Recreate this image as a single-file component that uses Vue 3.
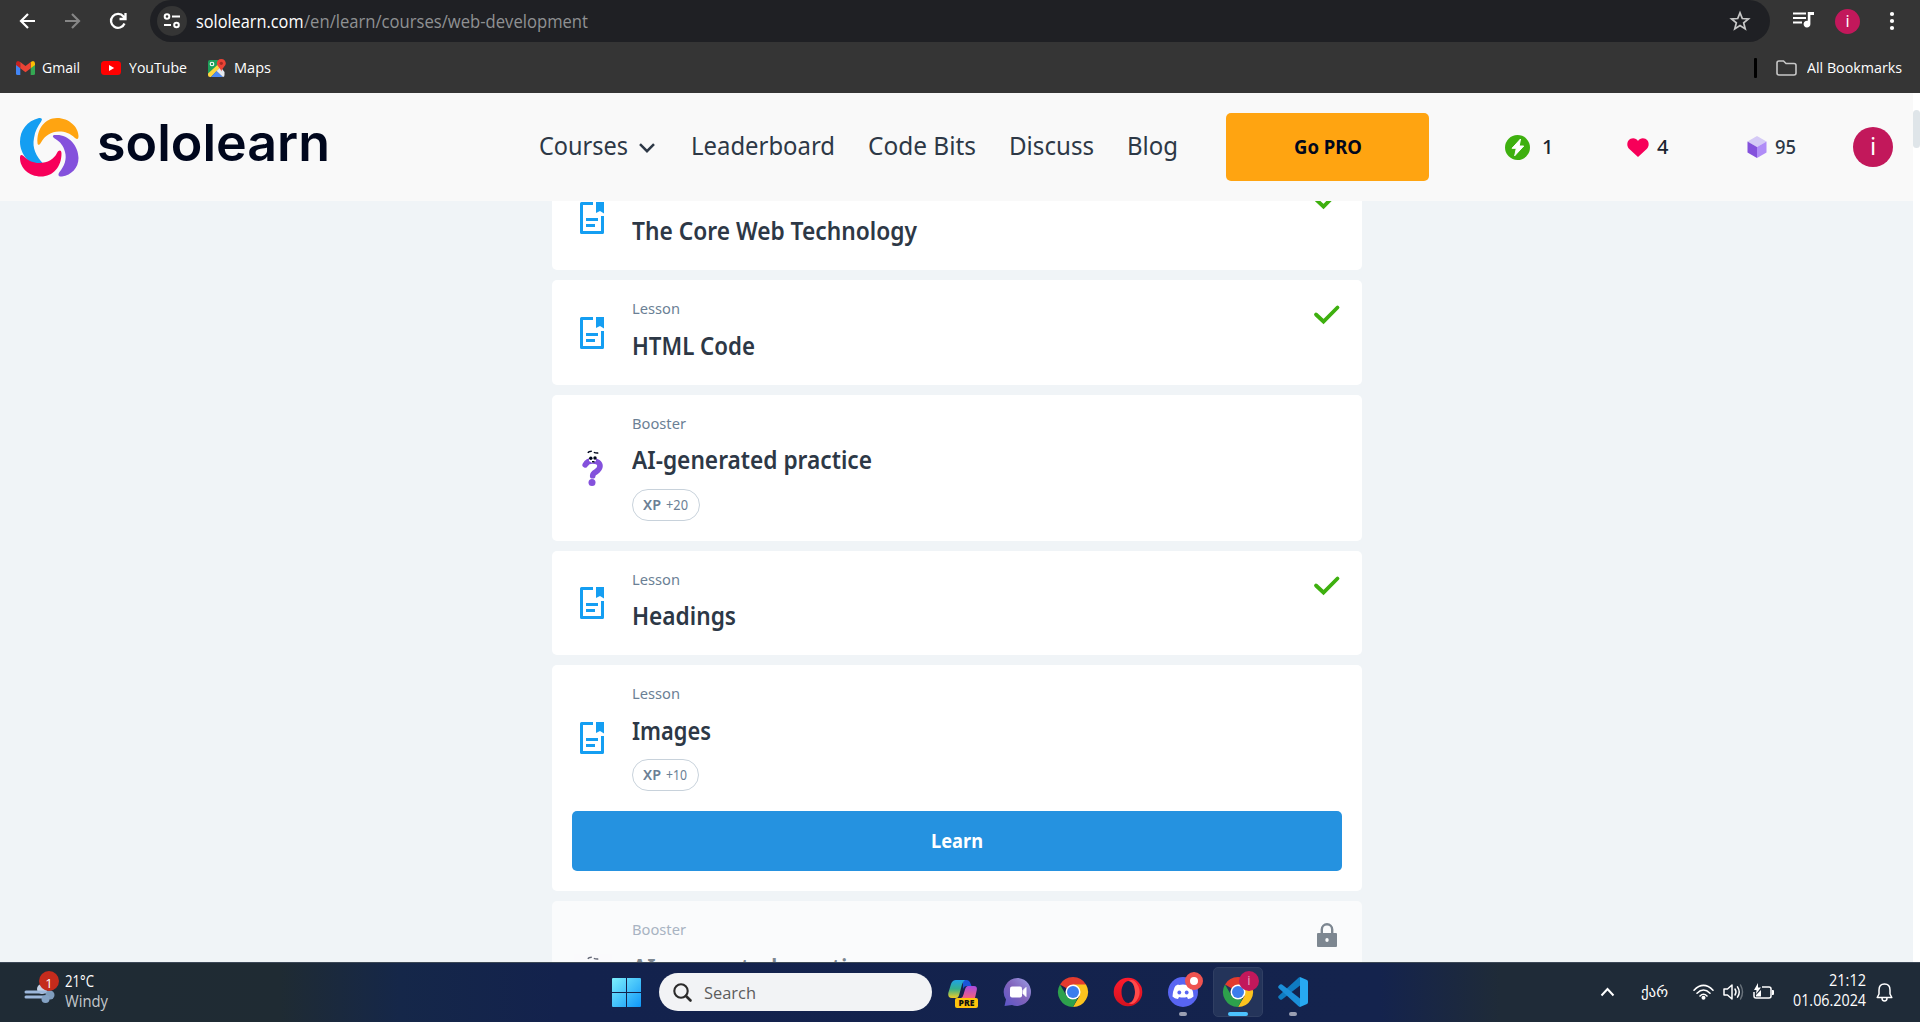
<script setup>
const vFit = {
  mounted(el, { value }) {
    const natural = el.getBoundingClientRect().width
    el.style.width = value + 'px'
    el.style.transform = `scaleX(${value / natural})`
  }
}

const bookmarks = [
  { name: 'Gmail', w: 38 },
  { name: 'YouTube', w: 58 },
  { name: 'Maps', w: 37 }
]

const nav = [
  { name: 'Courses', w: 89, menu: true },
  { name: 'Leaderboard', w: 144 },
  { name: 'Code Bits', w: 108 },
  { name: 'Discuss', w: 85 },
  { name: 'Blog', w: 51 }
]

const cards = [
  { kind: 'Lesson', kw: 48, title: 'The Core Web Technology', w: 285, state: 'done', h: 105, gap: 12 },
  { kind: 'Lesson', kw: 48, title: 'HTML Code', w: 123, state: 'done', h: 105, gap: 12 },
  { kind: 'Booster', kw: 54, title: 'AI-generated practice', w: 240, xp: '+20', xw: 22, h: 146, gap: 11 },
  { kind: 'Lesson', kw: 48, title: 'Headings', w: 104, state: 'done', h: 104, gap: 11 },
  { kind: 'Lesson', kw: 48, title: 'Images', w: 79, xp: '+10', xw: 21, h: 146, gap: 12, action: 'Learn' },
  { kind: 'Booster', kw: 54, title: 'AI-generated practice', w: 240, xp: '+20', xw: 22, state: 'locked', h: 146, gap: 13 }
]
</script>

<template>
  <div class="screen">
    <header class="browser">
      <div class="toolbar">
        <svg class="back" width="18" height="18" viewBox="0 0 18 18"><path d="M16 9H2.500M9 2L2 9l7 7" /></svg>
        <svg class="forward" width="18" height="18" viewBox="0 0 18 18"><path d="M2 9h13.500M9 2l7 7-7 7" /></svg>
        <svg class="reload" width="20" height="20" viewBox="0 0 20 20"><path d="M16.500 12.500A7 7 0 1 1 15.500 5.500L17 7.500M17.500 2v6h-6" /></svg>
        <div class="omnibox">
          <span class="site-info">
            <svg width="18" height="16" viewBox="0 0 18 16"><circle cx="4" cy="3.500" r="2.300" /><path d="M9 3.500h8M1 12h7" /><circle cx="13.500" cy="12" r="2.300" /></svg>
          </span>
          <span v-fit="107.500" class="host">sololearn.com</span><span v-fit="284" class="path">/en/learn/courses/web-development</span>
          <svg class="star" width="22" height="22" viewBox="0 0 24 24"><path d="M12 3l2.500 6.300 6.700.500-5.200 4.300 1.700 6.500-5.700-3.600-5.700 3.600L8 14.100 2.800 9.800l6.700-.500z" /></svg>
        </div>
        <svg class="media" width="21" height="17" viewBox="0 0 21 17"><path d="M0 1.500h13M0 6h13M0 10.500h9" stroke="#fff" stroke-width="2.200" /><path d="M14.800 0H21v3h-3.600v9a3.400 3.400 0 1 1-2.600-3.200z" fill="#fff" /></svg>
        <span class="profile">i</span>
        <svg class="dots" width="6" height="20" viewBox="0 0 6 20"><circle cx="3" cy="3" r="2.100" /><circle cx="3" cy="10" r="2.100" /><circle cx="3" cy="17" r="2.100" /></svg>
      </div>
      <div class="bookmarks">
        <div v-for="b in bookmarks" :key="b.name" class="bookmark">
          <svg v-if="b.name === 'Gmail'" width="19" height="14" viewBox="0 0 19 14"><path d="M0 2v10.500Q0 14 1.500 14H4.300V6z" fill="#4285f4" /><path d="M19 2v10.500q0 1.500-1.500 1.500h-2.800V6z" fill="#34a853" /><path d="M14.700 1L17 .100q2 .200 2 2.300V4l-4.300 3.300z" fill="#fbbc04" /><path d="M4.300 1L2 .100Q0 .300 0 2.400V4l4.300 3.300z" fill="#c5221f" /><path d="M4.300 1l5.200 4 5.200-4v6.200l-5.200 4-5.200-4z" fill="#ea4335" /></svg>
          <svg v-else-if="b.name === 'YouTube'" width="20" height="14" viewBox="0 0 20 14"><rect width="20" height="14" rx="3.500" fill="#f00" /><path d="M8 4l5.200 3L8 10z" fill="#fff" /></svg>
          <svg v-else width="18" height="18" viewBox="0 0 18 18"><path d="M0 3q0-2 2-2h8l1 7-8 7.500L0 14z" fill="#1e9f5a" /><path d="M0 14.500L11 4.500l2 3L3 18H2q-2 0-2-2z" fill="#fdd63f" /><path d="M3 18l5.500-6L15 18z" fill="#4c8bf5" /><path d="M8.500 12l4-4 4 5v3q0 2-1.500 2z" fill="#e7eaf0" /><circle cx="4" cy="5" r="1.800" fill="none" stroke="#fff" stroke-width="1.100" /><path d="M13.300 0c2.700 0 4.500 2 4.500 4.300 0 3-3.500 4.200-4.500 8.200-1-4-4.500-5.200-4.500-8.200C8.800 2 10.600 0 13.300 0z" fill="#ea4335" /><circle cx="13.300" cy="4.300" r="1.600" fill="#a52a22" /></svg>
          <span v-fit="b.w">{{ b.name }}</span>
        </div>
        <div class="all-bookmarks">
          <i class="divider"></i>
          <svg width="21" height="16" viewBox="0 0 21 16"><path d="M1 3q0-2 2-2h4.500l2.500 2.500h8q2 0 2 2V13q0 2-2 2H3q-2 0-2-2z" fill="none" stroke="#c7c7c7" stroke-width="1.600" /></svg>
          <span v-fit="95">All Bookmarks</span>
        </div>
      </div>
    </header>

    <div class="page">
      <main class="site">
        <div class="site-header">
          <svg class="logo" width="60" height="60" viewBox="0 0 60 60">
            <path d="M20 1C8 4 1 13 1 25c0 12 10 24 22 26 3.500 0 3.500-2 1.500-4C17 39 13 31 15 21c1-7 4-12 6.500-15.500C24 2 23 1 20 1z" fill="#149ef2" />
            <path d="M18.500 26C17.500 12 26 1 38 1c12 0 21.500 9 21.500 18 0 3-1 4-3.500 2-5-5-10-6.500-16-6.500-8 0-14 4-18 11-1.500 3-3.500 3-3.500.5z" fill="#ffa411" />
            <path d="M36.500 18c12-1 23 10 23 23 0 10-7 17-16.500 18.500-3.500.5-4.500-1.500-2.500-4.500 5-6 7.500-13 5.500-20-1.500-6-4.500-10-9.500-13-3.500-2-3.500-4 0-4z" fill="#8451dc" />
            <path d="M1 41c0-3 1-4 3.500-2 5 5 10 7 15.500 7 9 0 15-4 18-10 2-3.500 4.500-3 4.500.5C42.500 50 34 59.500 22 59.500 10 59.500 1 51 1 41z" fill="#f70059" />
          </svg>
          <span v-fit="233" class="wordmark">sololearn</span>
          <nav>
            <a v-for="n in nav" :key="n.name"><span v-fit="n.w">{{ n.name }}</span>
              <svg v-if="n.menu" width="16" height="10" viewBox="0 0 16 10"><path d="M1 1.200l7 7 7-7" /></svg>
            </a>
          </nav>
          <button class="pro"><span v-fit="68">Go PRO</span></button>
          <div class="stat streak">
            <svg width="25" height="25" viewBox="0 0 25 25"><circle cx="12.500" cy="12.500" r="12.500" fill="#3eb00f" /><path d="M15.500 4L7 13.300h4.300L9.700 20.800l9-9.800h-4.500z" fill="#fff" stroke="#fff" stroke-linejoin="round" /></svg>
            <b>1</b>
          </div>
          <div class="stat hearts">
            <svg width="22" height="19" viewBox="0 0 22 19"><path d="M11 19L2.300 11C-.400 8.300 0 4.500 1.500 2.500 4-.800 9-.500 11 3c2-3.500 7-3.800 9.500-.500 1.500 2 1.900 5.800-.8 8.500z" fill="#f70059" /></svg>
            <b>4</b>
          </div>
          <div class="stat bits">
            <svg width="20" height="22" viewBox="0 0 20 22"><path d="M10 0l9.500 5.500L10 11 .500 5.500z" fill="#d5caf6" /><path d="M.500 5.500L10 11v11L.500 16.500z" fill="#8451dc" /><path d="M19.500 5.500L10 11v11l9.500-5.500z" fill="#b08cf7" /></svg>
            <b v-fit="21">95</b>
          </div>
          <span class="avatar">i</span>
        </div>

        <div class="viewport">
          <div class="list">
            <section v-for="(c, i) in cards" :key="i" class="card" :class="c.state">
              <div class="row" :style="{ height: c.h + 'px' }">
                <span class="kind-icon">
                  <svg v-if="c.kind === 'Lesson'" width="24" height="32" viewBox="0 0 24 32"><path d="M13 0v3H3v26h18V14h3v16.500q0 1.500-1.500 1.500h-21Q0 32 0 30.500v-29Q0 0 1.500 0zM16 0h8v11.500L20 9l-4 2zM6 16h12v3H6zM6 22h9v3H6z" fill="#149ef2" /></svg>
                  <svg v-else width="24" height="36" viewBox="0 0 24 36"><path d="M5.200 14.800C6.800 12 9.300 10.900 12.500 10.900c4.600 0 7.500 2 7.500 5.200 0 3-1.700 4.300-4.300 5.900-2.100 1.200-2.900 2-3 3.800" fill="none" stroke="#8451dc" stroke-width="5.600" stroke-linecap="round" /><circle cx="12" cy="32.500" r="3.500" fill="#8451dc" /><path d="M9 7.500h7v3.500l-3.500 2L9 11z" fill="#fff" /><circle cx="10.800" cy="8.300" r="1.700" fill="#00071d" /><circle cx="15" cy="8" r="1.700" fill="#00071d" /><path d="M7.800 2.800q1-1.400 4-1.500M13.800 2.400q2.500.800 4.500.500M12 11.700h2.500" fill="none" stroke="#00071d" stroke-width="1.500" /></svg>
                </span>
                <div class="text">
                  <div class="kind"><span v-fit="c.kw">{{ c.kind }}</span></div>
                  <div class="title" :style="{ marginTop: c.gap + 'px', marginBottom: 26 - c.gap + 'px' }"><span v-fit="c.w">{{ c.title }}</span></div>
                  <div v-if="c.xp" class="xp"><b v-fit="18">XP</b><span v-fit="c.xw">{{ c.xp }}</span></div>
                </div>
                <svg v-if="c.state === 'done'" class="status" width="26" height="20" viewBox="0 0 26 20"><path d="M2 9.500l7.500 7L23.500 2.500" fill="none" stroke="#3eb00f" stroke-width="3.800" stroke-linecap="round" /></svg>
                <svg v-if="c.state === 'locked'" class="status lock" width="20" height="25" viewBox="0 0 20 25"><path d="M4.800 11V6.500a5.200 5.200 0 0 1 10.400 0V11" fill="none" stroke="#7d8791" stroke-width="2.400" /><path d="M1 10h18q1 0 1 1v12q0 1-1 1H1q-1 0-1-1V11q0-1 1-1zM10 15a1.700 2 0 1 0 0 4 1.700 2 0 1 0 0-4" fill="#7d8791" fill-rule="evenodd" /></svg>
              </div>
              <button v-if="c.action" class="action"><span v-fit="52">{{ c.action }}</span></button>
            </section>
          </div>
        </div>
      </main>
      <aside class="scrollbar"><i></i></aside>
    </div>

    <footer class="taskbar">
      <div class="weather">
        <svg width="40" height="36" viewBox="0 0 40 36"><circle cx="17" cy="16" r="5" fill="#c6d3e6" /><path d="M1 19h21" stroke="#9db8dc" stroke-width="3" stroke-linecap="round" /><path d="M1 24h17" stroke="#9db8dc" stroke-width="3" stroke-linecap="round" /><circle cx="25" cy="22" r="4.500" fill="#7f9dbd" /><circle cx="20.500" cy="26" r="4" fill="#84a2c4" /><circle cx="24" cy="8" r="10" fill="#c42b1c" /></svg>
        <span class="count">1</span>
        <div><span v-fit="29">21°C</span><span v-fit="43" class="dim">Windy</span></div>
      </div>
      <div class="center">
        <svg class="start" width="29" height="29" viewBox="0 0 29 29"><defs><linearGradient id="win" x2="1" y2="1"><stop stop-color="#7df0fd" /><stop offset="1" stop-color="#0f96f8" /></linearGradient></defs><path d="M1 0h13v14H0V1q0-1 1-1zM15 0h13q1 0 1 1v13H15zM0 15h14v14H1q-1 0-1-1zM15 15h14v13q0 1-1 1H15z" fill="url(#win)" /></svg>
        <div class="search">
          <svg width="19" height="19" viewBox="0 0 19 19"><circle cx="8" cy="8" r="6.700" fill="none" stroke="#2b2b2b" stroke-width="2.100" /><path d="M13 13l4.500 4.500" stroke="#2b2b2b" stroke-width="2.600" stroke-linecap="round" /></svg>
          <span v-fit="52">Search</span>
        </div>
        <div class="app copilot">
          <svg width="30" height="30" viewBox="0 0 30 30"><defs><linearGradient id="cpa" x2="0" y2="1"><stop stop-color="#1fa3e8" /><stop offset=".5" stop-color="#35b08c" /><stop offset="1" stop-color="#f1ce25" /></linearGradient><linearGradient id="cpb" x2="0" y2="1"><stop stop-color="#a64be0" /><stop offset="1" stop-color="#f5617c" /></linearGradient></defs><path d="M15 3h3.500q3 0 4 3.500L23.500 9H19q-3 0-4 3z" fill="#1956d8" /><path d="M8 3h9q-2 1-3 4.500l-3 11Q10.300 21 8 21H4q-4.500 0-3.700-5L3 7q1.500-4 5-4z" fill="url(#cpa)" /><path d="M20 9h6q3.500 0 2.800 4L27 21H13q2-1 2.500-3.500l1.500-5Q18 9 20 9z" fill="url(#cpb)" /></svg>
          <span class="pre">PRE</span>
        </div>
        <div class="app"><svg width="30" height="30" viewBox="0 0 30 30"><defs><linearGradient id="chat" x1="1" x2="0" y2="1"><stop stop-color="#9c9fe6" /><stop offset=".5" stop-color="#8163bb" /><stop offset="1" stop-color="#5a55c8" /></linearGradient></defs><path d="M15.500 1A14 14 0 1 1 9 28L1.500 29 3 22.500A14 14 0 0 1 15.500 1z" fill="url(#chat)" /><rect x="7" y="9.500" width="12" height="11" rx="2" fill="#fff" /><path d="M20 13.500l3-3v9l-3-3z" fill="#fff" stroke="#fff" stroke-linejoin="round" /></svg></div>
        <div class="app"><svg width="30" height="30" viewBox="0 0 30 30"><path d="M15 15L2 7.500A15 15 0 0 1 28 7.500z" fill="#e33b2e" /><path d="M15 7.500h13A15 15 0 0 1 15 30l6.500-11z" fill="#fcc31e" /><path d="M2 7.500l6.500 11.300L15 22.500l4.500-1L15 30A15 15 0 0 1 2 7.500z" fill="#2da14c" /><circle cx="15" cy="15" r="7.500" fill="#fff" /><circle cx="15" cy="15" r="6" fill="#3b7ded" /></svg></div>
        <div class="app"><svg width="30" height="30" viewBox="0 0 30 30"><defs><linearGradient id="op" x2="0" y2="1"><stop stop-color="#ff1b2d" /><stop offset="1" stop-color="#d3121f" /></linearGradient></defs><path d="M15 .700a14.300 14.300 0 1 0 0 28.600 14.300 14.300 0 0 0 0-28.600zM15.500 4c4 0 6.500 5 6.500 11s-2.500 11-6.500 11S8.500 21 8.500 15s3-11 7-11z" fill="url(#op)" fill-rule="evenodd" /><path d="M15.500 4q3-2 6 0A14.300 14.300 0 0 1 21.500 26q-3 2-6 0C19.500 26 22 21 22 15S19.500 4 15.500 4z" fill="#ff4b4b" /></svg></div>
        <div class="app"><svg width="30" height="30" viewBox="0 0 30 30"><circle cx="15" cy="15" r="15" fill="#5865f2" /><path d="M11 8q4-1 8 0l1-.500q3 1 3.500 3 2 4.500 2 9-2 2-5.500 2.500l-1-2q-4 1-8 0l-1 2q-3.500-.500-5.500-2.500 0-4.500 2-9 .500-2 3.500-3z" fill="#fff" /><ellipse cx="11.300" cy="15.500" rx="1.900" ry="2.100" fill="#5865f2" /><ellipse cx="18.700" cy="15.500" rx="1.900" ry="2.100" fill="#5865f2" /></svg><i class="rec"></i><i class="run"></i></div>
        <div class="app active"><svg width="30" height="30" viewBox="0 0 30 30"><path d="M15 15L2 7.500A15 15 0 0 1 28 7.500z" fill="#e33b2e" /><path d="M15 7.500h13A15 15 0 0 1 15 30l6.500-11z" fill="#fcc31e" /><path d="M2 7.500l6.500 11.300L15 22.500l4.500-1L15 30A15 15 0 0 1 2 7.500z" fill="#2da14c" /><circle cx="15" cy="15" r="7.500" fill="#fff" /><circle cx="15" cy="15" r="6" fill="#3b7ded" /></svg><i class="user">i</i><i class="run"></i></div>
        <div class="app"><svg width="30" height="30" viewBox="0 0 30 30"><path d="M22 0l7 3q1 .500 1 2v20q0 1.500-1 2l-7 3z" fill="#27a9f1" /><path d="M22 8.500L4 22.500q-1 .500-2 0l-1.500-1.500q-.800-1 0-2L20.500.700Q21.500 0 22 0z" fill="#0f7bc1" /><path d="M22 21.500L4 7.500q-1-.500-2 0L.500 9q-.800 1 0 2l20 18.300q1 .700 1.500.700z" fill="#1b8fd9" /></svg><i class="run"></i></div>
      </div>
      <div class="tray">
        <svg class="up" width="15" height="10" viewBox="0 0 15 10"><path d="M1.500 8.500l6-6.500 6 6.500" fill="none" stroke="#fff" stroke-width="2" /></svg>
        <span v-fit="27" class="lang">ქარ</span>
        <svg class="wifi" width="21" height="16" viewBox="0 0 21 16"><g fill="none" stroke="#fff" stroke-width="1.600" stroke-linecap="round"><path d="M1 6.200q9.500-9.500 19 0M4 9.200q6.500-6.500 13 0M7 12q3.500-3.500 7 0" /></g><circle cx="10.500" cy="13.800" r="2" fill="#fff" /></svg>
        <svg class="sound" width="21" height="18" viewBox="0 0 21 18"><g fill="none" stroke="#fff" stroke-width="1.500" stroke-linejoin="round" stroke-linecap="round"><path d="M1 6h3.500L9 2v14l-4.500-4H1zM12 6q2 3 0 6M14.500 3.800q3.500 5.200 0 10.400" /><path d="M17.500 2q4 7 0 14" stroke="#69727b" /></g></svg>
        <svg class="battery" width="21" height="18" viewBox="0 0 21 18"><path d="M9 4h7q2 0 2 2v7q0 2-2 2H3q-2 0-2-2V9" fill="none" stroke="#fff" stroke-width="1.500" /><path d="M19 7h1q1 0 1 1v3q0 1-1 1h-1zM5 0L1 7h2.500L3 11l5-6.500H5zM3 13.500V12l5-5v6.500z" fill="#fff" /></svg>
        <div class="clock"><span v-fit="37">21:12</span><span v-fit="73">01.06.2024</span></div>
        <svg class="bell" width="17" height="19" viewBox="0 0 17 19"><path d="M1.200 14.500L3 11V7q0-6 5.500-6T14 7v4l1.800 3.500zM6 15q0 3 2.500 3t2.500-3" fill="none" stroke="#fff" stroke-width="1.500" stroke-linejoin="round" /></svg>
      </div>
    </footer>
  </div>
</template>

<style>
body { margin: 0; overflow: hidden; }
</style>

<style scoped>
* { box-sizing: border-box; }
.screen { width: 1920px; height: 1022px; display: flex; flex-direction: column; overflow: hidden; font-family: "Noto Sans", "Open Sans", sans-serif; }
.screen span, .screen b { white-space: nowrap; transform-origin: 0 50%; }
svg { display: block; flex: none; overflow: visible; }
button { border: 0; padding: 0; font: inherit; display: flex; align-items: center; justify-content: center; }

.browser { height: 93px; flex: none; background: #353535; color: #fff; font-family: "Open Sans", "Noto Sans", sans-serif; }
.toolbar { height: 42px; display: flex; align-items: center; }
.toolbar path { fill: none; }
.back { margin-left: 19px; stroke: #fff; stroke-width: 2.200; }
.forward { margin-left: 26px; stroke: #868686; stroke-width: 2.200; }
.reload { margin-left: 27px; stroke: #fff; stroke-width: 2.300; }
.toolbar .media path:last-child { fill: #fff; }
.omnibox { width: 1620px; height: 42px; margin-left: 22px; border-radius: 21px; background: #1f2024; display: flex; align-items: center; font-size: 17.500px; }
.site-info { width: 30px; height: 30px; margin: 0 9px 0 7px; border-radius: 50%; background: #353535; display: flex; align-items: center; justify-content: center; }
.site-info svg { fill: none; stroke: #fff; stroke-width: 2; }
.host, .path { display: inline-block; line-height: 24px; }
.path { color: #8f9193; }
.star { margin: 0 19px 0 auto; stroke: #c7c7c7; stroke-width: 1.900; }
.media { margin: -2px 0 0 23px; }
.profile { width: 25px; height: 25px; margin-left: 21px; border-radius: 50%; background: #c2185b; text-align: center; font-family: "Noto Sans", sans-serif; font-size: 16px; line-height: 24px; }
.dots { margin-left: 29px; fill: #fff; }
.bookmarks { height: 51px; display: flex; align-items: center; padding: 0 18px 0 16px; font-size: 15px; }
.bookmark { display: flex; align-items: center; height: 51px; margin-right: 21px; gap: 8px; }
.bookmark:first-child { gap: 7px; }
.bookmark span, .all-bookmarks span { display: inline-block; line-height: 20px; margin-top: -2px; }
.all-bookmarks { margin-left: auto; display: flex; align-items: center; }
.divider { width: 3px; height: 20px; background: #000; margin-right: 19px; border-radius: 1px; }
.all-bookmarks svg { margin-right: 10px; }

.page { height: 869px; flex: none; display: flex; }
.site { width: 1913px; background: #f0f4f7; }
.scrollbar { width: 7px; background: #fff; padding-top: 17px; }
.scrollbar i { display: block; height: 38px; border-radius: 4px; background: #dfe5e9; }
.site-header { height: 108px; background: #f9f9f9; display: flex; align-items: center; color: #2d3846; }
.logo { margin-left: 19px; }
.wordmark { display: inline-block; margin: -9px 0 0 18px; font-family: Inter, sans-serif; font-size: 51px; line-height: 60px; font-weight: 600; color: #00071d; }
nav { display: flex; margin: -4px 0 0 209px; gap: 33px; font-size: 25px; line-height: 32px; }
nav a { display: flex; align-items: center; }
nav a span { display: inline-block; }
nav svg { margin: 5px 3px 0 11px; fill: none; stroke: #2d3846; stroke-width: 2.500; }
.pro { width: 203px; height: 68px; margin-left: 48px; border-radius: 5px; background: #ffa411; color: #00071d; font-size: 20px; font-weight: 700; }
.stat { display: flex; align-items: center; font-size: 20px; line-height: 26px; }
.stat b { font-weight: 500; display: inline-block; }
.streak { width: 122px; margin-left: 76px; gap: 12px; color: #1a2430; }
.hearts { width: 120px; gap: 8px; color: #1a2430; }
.bits { width: 106px; gap: 8px; }
.avatar { width: 40px; height: 40px; border-radius: 50%; background: #c2185b; color: #fff; text-align: center; font-size: 24px; line-height: 38px; }

.viewport { height: 761px; overflow: hidden; }
.list { width: 810px; margin: -36px 0 0 552px; display: flex; flex-direction: column; gap: 10px; }
.card { flex: none; background: #fff; border-radius: 5px; overflow: hidden; }
.card:first-child .kind { visibility: hidden; }
.row { display: flex; align-items: center; padding: 0 22px 0 28px; }
.kind-icon { margin: 0 28px 0 0; }
.text { align-self: flex-start; padding-top: 18px; }
.kind { height: 20px; font-size: 14.500px; line-height: 20px; color: #6b7f95; }
.title { height: 30px; font-size: 25px; line-height: 30px; font-weight: 600; color: #2d3846; }
.kind span, .title span { display: inline-block; }
.xp { height: 32px; width: fit-content; border: 1px solid #c8d2db; border-radius: 16px; padding: 0 11px 2px 10px; display: flex; align-items: center; gap: 5px; font-size: 14px; color: #6b7f95; }
.xp b, .xp span { display: inline-block; font-weight: 600; }
.xp span { font-weight: 400; }
.status { align-self: flex-start; margin: 25px 0 0 auto; }
.locked { background: #fafbfc; }
.locked .title { color: #7d8791; }
.locked .kind { color: #a8b3c2; }
.locked .kind-icon { opacity: .6; }
.lock { margin: 22px 3px 0 auto; }
.action { width: 770px; height: 60px; margin: 0 0 20px 20px; border-radius: 5px; background: #2592e0; color: #fff; font-size: 20px; font-weight: 700; }
.pro span, .action span { display: inline-block; line-height: 26px; }

.taskbar { height: 60px; flex: none; border-top: 1px solid #3c4857; background: linear-gradient(90deg, #1f2b35 0, #1f2b33 280px, #152749 400px, #13224d 560px, #14234d 1380px, #1f2b38 1500px); color: #fff; display: flex; align-items: center; font-family: "Open Sans", "Noto Sans", sans-serif; font-size: 15.500px; }
.weather { width: 612px; display: flex; align-items: center; padding-left: 25px; position: relative; }
.weather .count { position: absolute; left: 44px; top: -1px; width: 10px; text-align: center; font-size: 13px; line-height: 18px; }
.weather div, .clock { display: flex; flex-direction: column; align-items: flex-start; line-height: 20px; margin-top: -4px; }
.weather svg { margin-top: -3px; }
.dim { color: #c3c7cb; }
.center { display: flex; align-items: center; width: 988px; padding-bottom: 1px; }
.search { width: 273px; height: 38px; margin: 0 12px 0 18px; border-radius: 19px; background: #f2f3f5; color: #5c5c5c; display: flex; align-items: center; padding-left: 14px; gap: 12px; font-size: 17px; }
.app { width: 50px; height: 50px; margin-right: 5px; border: 1px solid transparent; border-radius: 5px; display: flex; align-items: center; justify-content: center; position: relative; }
.active { background: #24345a; border-color: #303f63; }
.copilot { margin-left: -6px; }
.pre { position: absolute; left: 16px; bottom: 8px; width: 23px; height: 10px; border-radius: 2px; background: #ffc40c; color: #111; font-size: 8.500px; font-weight: 800; line-height: 10px; text-align: center; }
.run { position: absolute; left: 20px; bottom: 0; width: 8px; height: 4px; border-radius: 2px; background: #9a9fb2; }
.active .run { left: 14px; width: 20px; background: #4cc2ff; }
.rec { position: absolute; left: 26px; top: 4px; width: 18px; height: 18px; border-radius: 50%; border: 5px solid #ef5350; background: #fff; }
.user { position: absolute; left: 25px; top: 3px; width: 20px; height: 20px; border-radius: 50%; background: #c2185b; color: #e8a9c1; font-size: 13px; line-height: 19px; text-align: center; font-style: normal; }
.tray { display: flex; align-items: center; flex: 1; padding-bottom: 1px; }
.lang { display: inline-block; margin-left: 26px; font-family: "DejaVu Sans", sans-serif; font-size: 14px; }
.wifi { margin-left: 25px; }
.sound { margin-left: 9px; }
.battery { margin-left: 9px; }
.clock { margin-left: 19px; width: 73px; align-items: flex-end; }
.bell { margin-left: 10px; }
</style>
